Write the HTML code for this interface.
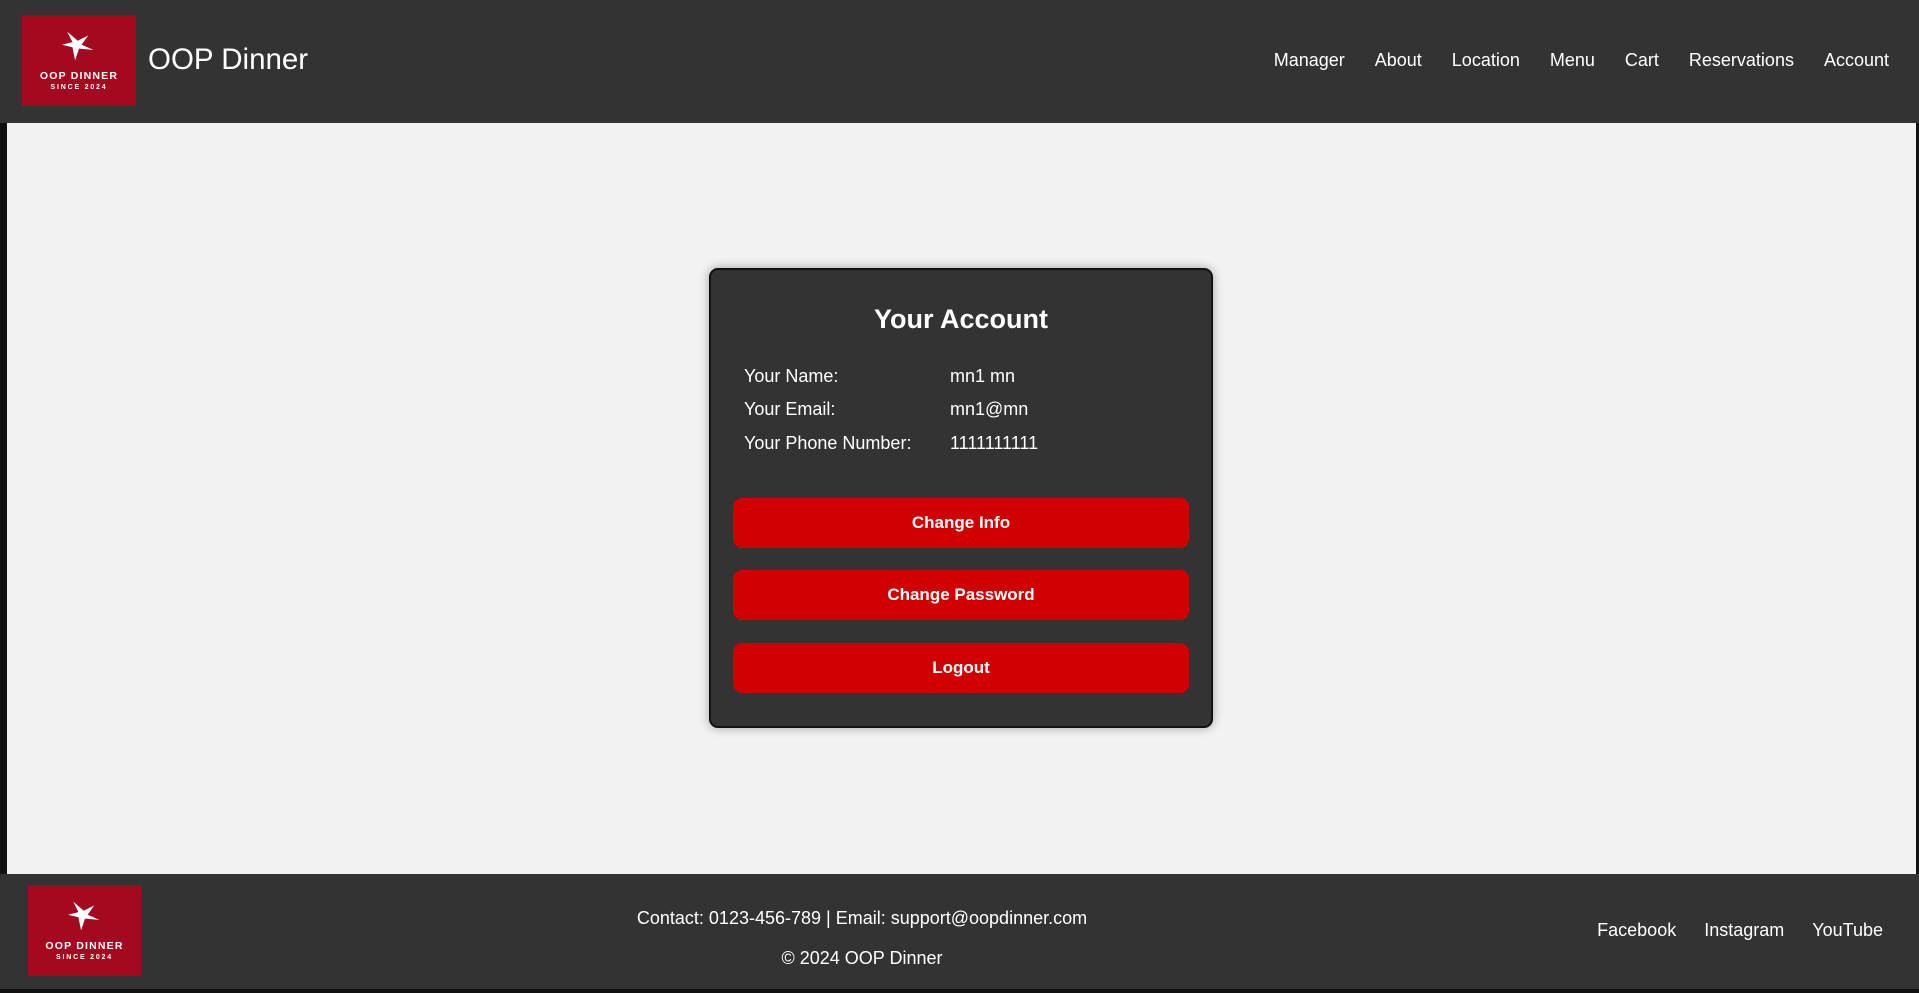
<!DOCTYPE html>
<html><head><meta charset="utf-8"><style>
*{margin:0;padding:0;box-sizing:border-box}
body{width:1919px;height:993px;background:#111;font-family:"Liberation Sans",Arial,sans-serif;color:#fff;position:relative;overflow:hidden}
.hdr{position:absolute;left:0;top:0;width:1919px;height:123px;background:#333}
.main{position:absolute;left:7px;top:123px;width:1909px;height:751px;background:#f2f2f2}
.ftr{position:absolute;left:0;top:874px;width:1919px;height:115px;background:#333}
.logo{position:absolute;background:#a3091f;text-align:center;color:#fff;font-weight:bold}
.nav{position:absolute;right:30px;top:50px;font-size:18px;display:flex;gap:30px}
.card{position:absolute;left:709px;top:268px;width:504px;height:460px;background:#333;border:2px solid #111;border-radius:9px;box-shadow:0 0 10px rgba(0,0,0,.35)}
.card h2{position:absolute;left:0;width:100%;top:34px;text-align:center;font-size:27px;font-weight:bold}
.row{position:absolute;left:33px;font-size:18px}
.row span{position:absolute;left:206px;white-space:nowrap}
.btn{position:absolute;left:22px;width:456px;height:50px;background:#d00000;border-radius:9px;font-weight:bold;font-size:17px;text-align:center;line-height:50px}
</style></head><body>
<div class="hdr">
 <div class="logo" style="left:22px;top:15px;width:114px;height:91px">
  <svg width="40" height="34" viewBox="0 0 30 26" style="margin-top:14px"><path d="M6 2 L14 9 L22 5 L17 12 L26 16 L15 15 L12 24 L10 14 L2 12 L10 10Z" fill="#fff"/></svg>
  <div style="font-size:10.5px;letter-spacing:1.2px;margin-top:2px">OOP DINNER</div>
  <div style="font-size:7px;letter-spacing:1.8px;margin-top:2px">SINCE 2024</div>
 </div>
 <div style="position:absolute;left:148px;top:43px;font-size:29.5px">OOP Dinner</div>
 <div class="nav"><span>Manager</span><span>About</span><span>Location</span><span>Menu</span><span>Cart</span><span>Reservations</span><span>Account</span></div>
</div>
<div class="main"></div>
<div class="card">
 <h2>Your Account</h2>
 <div class="row" style="top:96px">Your Name:<span>mn1 mn</span></div>
 <div class="row" style="top:129px">Your Email:<span>mn1@mn</span></div>
 <div class="row" style="top:163px">Your Phone Number:<span>1111111111</span></div>
 <div class="btn" style="top:228px">Change Info</div>
 <div class="btn" style="top:300px">Change Password</div>
 <div class="btn" style="top:373px">Logout</div>
</div>
<div class="ftr">
 <div class="logo" style="left:28px;top:11px;width:113px;height:91px">
  <svg width="40" height="34" viewBox="0 0 30 26" style="margin-top:14px"><path d="M6 2 L14 9 L22 5 L17 12 L26 16 L15 15 L12 24 L10 14 L2 12 L10 10Z" fill="#fff"/></svg>
  <div style="font-size:10.5px;letter-spacing:1.2px;margin-top:2px">OOP DINNER</div>
  <div style="font-size:7px;letter-spacing:1.8px;margin-top:2px">SINCE 2024</div>
 </div>
 <div style="position:absolute;left:0;width:1724px;text-align:center;top:34px;font-size:18px">Contact: 0123-456-789 | Email: support@oopdinner.com</div>
 <div style="position:absolute;left:0;width:1724px;text-align:center;top:74px;font-size:18px">© 2024 OOP Dinner</div>
 <div style="position:absolute;right:36px;top:46px;font-size:18px;display:flex;gap:28px"><span>Facebook</span><span>Instagram</span><span>YouTube</span></div>
</div>
</body></html>
